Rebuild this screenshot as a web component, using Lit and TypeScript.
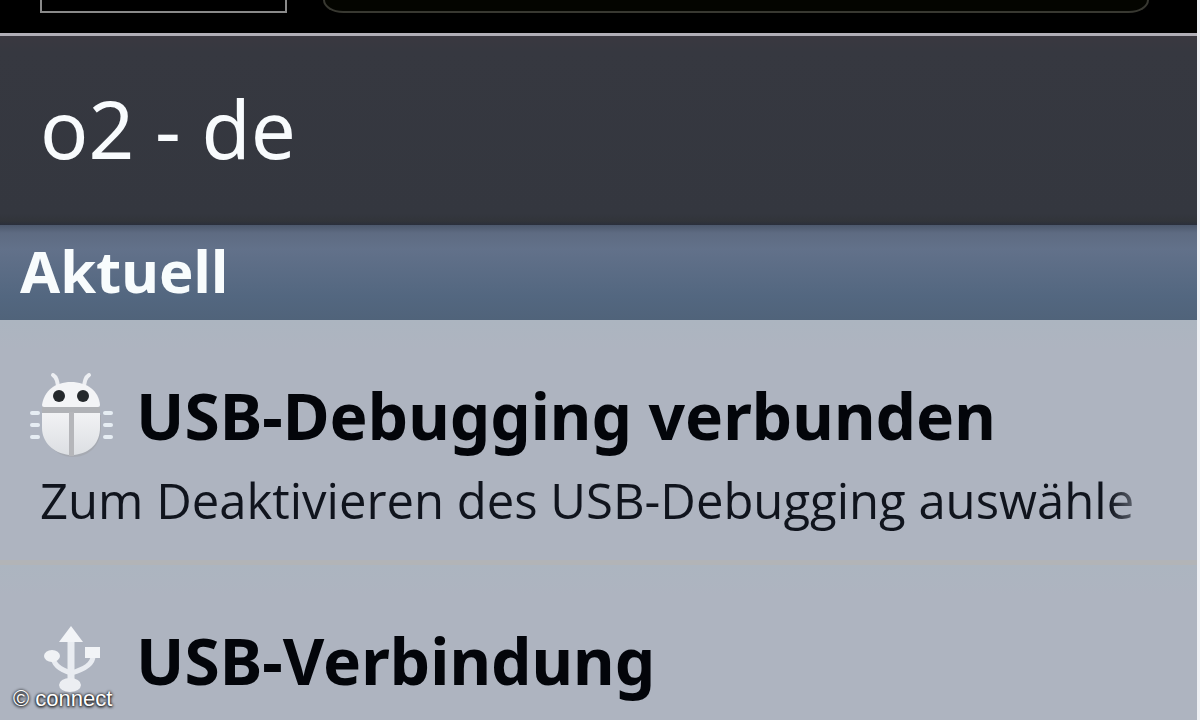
import { LitElement, html, css, svg } from "lit";
import { customElement } from "lit/decorators.js";

const bug = svg`
  <svg class="icon" viewBox="0 0 88 92" aria-hidden="true">
    <defs>
      <linearGradient id="shell" x1="0" y1="0" x2="0" y2="1">
        <stop offset="0" stop-color="#f1f2f4" />
        <stop offset="1" stop-color="#dcdfe3" />
      </linearGradient>
    </defs>
    <path d="M17 45V58C17 75 29 87 45 87S73 75 73 58V45Z" fill="#a3a5ac" opacity=".7" />
    <path d="M25 5Q30 8 30 19M61 5Q56 8 56 19" fill="none" stroke="#eceef2" stroke-width="4" stroke-linecap="round" />
    <path d="M14 35C16 21 27 12 43 12S71 21 72 35Q72 37 70 37H16Q14 37 14 35Z" fill="#f3f4f6" />
    <path d="M14 37H72V43H14Z" fill="#b0b2b6" />
    <path d="M14 43H41V85C25 83 14 72 14 58Z" fill="url(#shell)" />
    <path d="M46 43H72V58C72 72 63 83 46 85Z" fill="url(#shell)" />
    <path d="M41 42H46V86H41Z" fill="#b5b6ba" />
    <circle cx="31" cy="26" r="6" fill="#25292c" />
    <circle cx="55" cy="26" r="6" fill="#25292c" />
    <path d="M4 43H10M4 55H10M4 67H10M77 43H83M77 55H83M77 67H83"
      stroke="#e6edf3" stroke-width="4" stroke-linecap="round" />
  </svg>`;

const usb = svg`
  <svg class="icon" viewBox="0 0 88 92" aria-hidden="true">
    <g fill="none" stroke="#e9ecf1">
      <path d="M43 22V70" stroke-width="7" />
      <path d="M25 41C25 50 33 55 43 58" stroke-width="5" />
      <path d="M65 41C65 50 54 55 43 58" stroke-width="5" />
    </g>
    <path d="M43 11L55 27H31Z" fill="#f2f4f7" />
    <ellipse cx="24" cy="41" rx="8" ry="6" fill="#f0f2f5" />
    <rect x="57" y="32" width="15" height="11" fill="#f2f4f7" />
    <ellipse cx="42" cy="70" rx="11" ry="7" fill="#eceef2" />
  </svg>`;

@customElement("app-root")
export class AppRoot extends LitElement {
  static styles = css`
    :host {
      display: block;
      height: 100vh;
      overflow: hidden;
      position: relative;
      background: #eef0f4;
      font-family: "Noto Sans", "Open Sans", sans-serif;
    }
    .screen {
      display: flex;
      flex-direction: column;
      min-height: 100%;
      margin-right: 3px;
      background: #aeb4c0;
    }
    .status {
      display: flex;
      gap: 36px;
      height: 13px;
      padding: 0 48px 20px 40px;
      background: #000;
    }
    .box {
      width: 247px;
      box-sizing: border-box;
      border: 2px solid #8a8a8a;
      border-top: 0;
    }
    .pill {
      flex: 1;
      box-sizing: border-box;
      border: 2px solid #383831;
      border-top: 0;
      border-radius: 0 0 28px 28px / 0 0 18px 18px;
      background: #040500;
    }
    .carrier {
      padding: 38px 40px 43px;
      border-top: 3px solid #b0aeb6;
      background: linear-gradient(#3a3840, #363840 16px, #34373f 94%, #31343a 98%, #2a2f3c);
      color: #f8fbfd;
      font-size: 80px;
      line-height: 108px;
    }
    h1, h2, h3, p, ul { margin: 0; padding: 0; font: inherit; }
    .section {
      padding: 0 20px 4px;
      background: linear-gradient(#4c586c, #5e6b82 8px, #62718a 24px, #536780 75%, #50637a);
      color: #f8fcfd;
      font-size: 58px;
      font-weight: 700;
      line-height: 91px;
    }
    ul { list-style: none; }
    .item {
      padding: 50px 52px 26px 28px;
      border-bottom: 5px solid #b2b4b7;
      background: linear-gradient(#acb5c0, #aeb4c0 30px);
    }
    .row { display: flex; align-items: center; gap: 20px; height: 92px; }
    .icon { width: 88px; height: 92px; flex: none; }
    .title {
      color: #03050a;
      font-size: 64px;
      font-weight: 700;
      line-height: 92px;
      white-space: nowrap;
    }
    .detail {
      padding: 4px 0 0 12px;
      overflow: hidden;
      color: #10141d;
      font-family: "Open Sans", "Noto Sans", sans-serif;
      font-size: 49px;
      line-height: 68px;
      white-space: nowrap;
      mask-image: linear-gradient(to left, rgba(0, 0, 0, 0.3), #000 36px);
    }
    .credit {
      position: absolute;
      left: 13px;
      bottom: 8px;
      color: #fff;
      font: 22px/26px "Liberation Sans", Arial, sans-serif;
      text-shadow: 0 0 3px #000, 0 1px 3px #000;
    }
  `;

  render() {
    return html`
      <main class="screen">
        <div class="status"><div class="box"></div><div class="pill"></div></div>
        <h1 class="carrier">o2 - de</h1>
        <h2 class="section">Aktuell</h2>
        <ul>
          <li class="item">
            <div class="row">${bug}<h3 class="title">USB-Debugging verbunden</h3></div>
            <p class="detail">Zum Deaktivieren des USB-Debugging auswähle</p>
          </li>
          <li class="item">
            <div class="row">${usb}<h3 class="title">USB-Verbindung</h3></div>
          </li>
        </ul>
      </main>
      <small class="credit">© connect</small>
    `;
  }
}
